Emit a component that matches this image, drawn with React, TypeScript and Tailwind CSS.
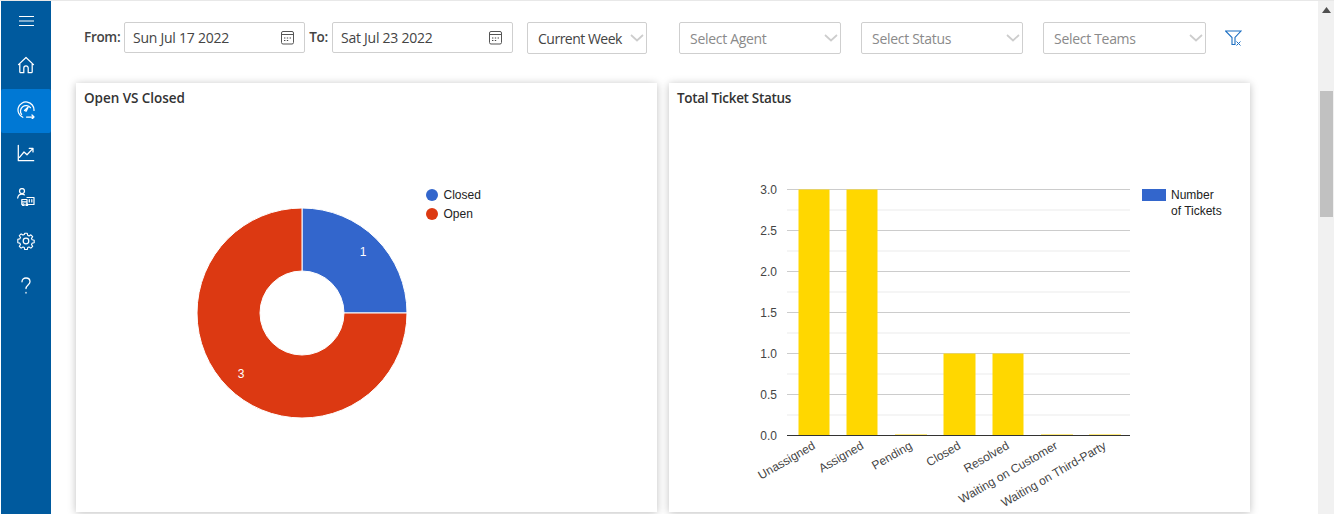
import React from "react";

const F = "[font-family:'Open_Sans',sans-serif]";

function Cal() {
  return (
    <svg width="15" height="15" viewBox="0 0 15 15" fill="none" stroke="#555" strokeWidth="1">
      <rect x="1.500" y="1.500" width="12" height="12.500" rx="1.500" />
      <path d="M1.500 4.500h12" />
      <path d="M4 8h1.400M6.800 8h1.400M9.600 8h1.400M4 10.500h1.400M6.800 10.500h1.400" stroke="#444" />
    </svg>
  );
}

function Chev() {
  return (
    <svg className="shrink-0" width="14" height="8" viewBox="0 0 14 8" fill="none" stroke="#cdcdcd" strokeWidth="1.700">
      <path d="M1 1l6 5.500L13 1" />
    </svg>
  );
}

function DateBox({ value, w }: { value: string; w: string }) {
  return (
    <div className={`flex items-center justify-between ${w} h-[31px] border border-[#cfcfcf] rounded-[2px] pl-[8px] pr-[9px] bg-white`}>
      <span className="text-[14px] text-[#444] tracking-[-0.25px] whitespace-nowrap">{value}</span>
      <Cal />
    </div>
  );
}

function Select({ label, w, dark }: { label: string; w: string; dark?: boolean }) {
  return (
    <div className={`flex items-center justify-between ${w} h-[32px] border border-[#cfcfcf] rounded-[2px] pl-[10px] pr-[2px] bg-white`}>
      <span className={`text-[14px] whitespace-nowrap pt-[1px] ${dark ? "text-[#444] tracking-[-0.5px]" : "text-[#8a8a8a] tracking-[-0.3px]"}`}>{label}</span>
      <Chev />
    </div>
  );
}

const icon = { width: 18, height: 18, viewBox: "0 0 18 18", fill: "none", stroke: "white", strokeWidth: 1.25, strokeLinecap: "round" as const, strokeLinejoin: "round" as const };

const navIcons = [
  <svg {...icon}><path d="M1.500 8.600 9 1.500l7.500 7.100M2.800 7.500v8.300a.9.9 0 0 0 .9.900h3.100v-4.600a2.200 2.200 0 0 1 4.400 0v4.600h3.100a.9.9 0 0 0 .9-.9V7.500" /></svg>,
  <svg {...icon}><path d="M5.800 16.300A8 8 0 1 1 17 9.400" /><path d="M4.600 13.400A5.400 5.400 0 1 1 13.400 6.700" /><path d="M7.500 9.400 11.200 6l-2 4.200z" /><path d="M9.500 16h7.500M15 14l2 2-2 2" /></svg>,
  <svg {...icon}><path d="M1.300 1.300v15.400h15.400" /><path d="M2.500 13.300 7 8l3 2.800 5.800-6.200M12.200 4.300h3.800v3.600" /></svg>,
  <svg {...icon}><circle cx="5" cy="3" r="2.500" /><path d="M.7 10c.4-2.500 2-3.800 4.300-3.800 1 0 1.700.2 2.300.6" /><path d="M4.800 11.500h5.200v4.800M4.800 11.500v4.800M4.800 13.800H10M10 9.500h7v7h-5.500M12.300 11.500v2.500M14.800 11.500v2.500" strokeWidth="1.200" /><circle cx="6.300" cy="16.700" r="0.900" /><circle cx="9.800" cy="16.700" r="0.900" /></svg>,
  <svg {...icon}><circle cx="9" cy="9" r="2.800" /><path d="M7.600 1.300h2.800l.5 2.300 1.500.7 2-1.300 2 2-1.300 2 .7 1.500 2.300.5v2.800l-2.300.5-.7 1.500 1.300 2-2 2-2-1.300-1.500.7-.5 2.300H7.600l-.5-2.300-1.500-.7-2 1.300-2-2 1.300-2-.7-1.500-2.300-.5V8l2.300-.5.7-1.500-1.300-2 2-2 2 1.300 1.500-.7z" transform="translate(.9 .1) scale(.9)" /></svg>,
  <svg {...icon} strokeWidth="1.300"><path d="M5 5.800C5 3.500 6.800 2 9 2s4 1.500 4 3.700c0 3.200-4 3.400-4 6.900" /><path d="M9 16.400v.6" /></svg>,
];

function Card({ title, spacing, children }: { title: string; spacing: string; children: React.ReactNode }) {
  return (
    <div className="w-[581px] h-[429px] bg-white shadow-[0_1px_8px_rgba(0,0,0,0.25)]">
      <div className={`h-[30px] pl-[8px] pt-[5px] text-[13.500px] font-semibold text-[#333] leading-[20px] ${spacing}`}>{title}</div>
      {children}
    </div>
  );
}

function Pie() {
  return (
    <svg className="block" width="581" height="399" viewBox="76 113 581 399" style={{ fontFamily: "'Liberation Sans',sans-serif" }}>
      <path d="M302 208A105 105 0 0 1 407 313H344A42 42 0 0 0 302 271Z" fill="#3366cc" stroke="#fff" strokeWidth="1" />
      <path d="M407 313A105 105 0 1 1 302 208V271A42 42 0 1 0 344 313Z" fill="#dc3912" stroke="#fff" strokeWidth="1" />
      <text x="363" y="256" fontSize="12" fill="#fff" textAnchor="middle">1</text>
      <text x="241" y="378" fontSize="12" fill="#fff" textAnchor="middle">3</text>
      <circle cx="432" cy="195" r="6" fill="#3366cc" />
      <circle cx="432" cy="214" r="6" fill="#dc3912" />
      <text x="443.500" y="199" fontSize="12" fill="#222">Closed</text>
      <text x="443.500" y="218" fontSize="12" fill="#222">Open</text>
    </svg>
  );
}

const bars: [number, number, number][] = [
  [798.500, 31, 3],
  [846.500, 31, 3],
  [895, 32, 0],
  [943.500, 32, 1],
  [992.500, 31, 1],
  [1041, 32, 0],
  [1089, 32, 0],
];
const labels: [string, number][] = [
  ["Unassigned", 816],
  ["Assigned", 864.500],
  ["Pending", 913],
  ["Closed", 961.500],
  ["Resolved", 1010],
  ["Waiting on Customer", 1058.500],
  ["Waiting on Third-Party", 1107],
];

function Bars() {
  const major = [3, 2.500, 2, 1.500, 1, 0.500];
  const y = (v: number) => 435.500 - v * 82;
  return (
    <svg className="block" width="581" height="399" viewBox="669 113 581 399" style={{ fontFamily: "'Liberation Sans',sans-serif" }}>
      {major.map((v) => (
        <g key={v}>
          <line x1="787" x2="1130" y1={y(v)} y2={y(v)} stroke="#cccccc" />
          <line x1="787" x2="1130" y1={y(v) + 20.500} y2={y(v) + 20.500} stroke="#ebebeb" />
          <text x="777" y={y(v) + 4.500} fontSize="12" fill="#444" textAnchor="end">{v.toFixed(1)}</text>
        </g>
      ))}
      <text x="777" y="440" fontSize="12" fill="#444" textAnchor="end">0.0</text>
      {bars.map(([x, w, v]) => (
        <rect key={x} x={x} y={v === 0 ? 434.500 : y(v)} width={w} height={v === 0 ? 1 : v * 82} fill="#ffd700" />
      ))}
      <line x1="787" x2="1130" y1="435.500" y2="435.500" stroke="#333" />
      {labels.map(([t, x]) => (
        <text key={t} x={x} y="448" fontSize="12" fill="#444" textAnchor="end" transform={`rotate(-30 ${x} 448)`}>{t}</text>
      ))}
      <rect x="1142" y="189" width="24" height="12" fill="#3366cc" />
      <text x="1171" y="199" fontSize="12" fill="#222">Number</text>
      <text x="1171" y="215" fontSize="12" fill="#222">of Tickets</text>
    </svg>
  );
}

export default function App() {
  return (
    <div className={`flex h-[514px] w-[1334px] overflow-hidden bg-white border-t border-[#e8e8e8] ${F}`}>
      <aside className="w-[51px] h-full pl-[1px] shrink-0 bg-white">
        <div className="h-full bg-[#005a9e] flex flex-col items-center">
          <div className="h-[42px] w-full flex items-center justify-center pb-[2px]">
            <svg width="15" height="12" viewBox="0 0 15 12" stroke="#fff" strokeWidth="1.200"><path d="M0 1.500h15M0 6h15M0 10.500h15" /></svg>
          </div>
          {navIcons.map((ic, i) => (
            <div
              key={i}
              className={`w-full flex items-center justify-center ${i === 0 ? "h-[46px] pb-[3px]" : i === 1 ? "h-[44px] pb-[3px] bg-[#0078d4] rounded-[2px]" : "h-[44px] pb-[4px]"}`}
            >
              {ic}
            </div>
          ))}
        </div>
      </aside>
      <main className="flex-1 min-w-0 pl-[25px] bg-white">
        <div className="flex items-center h-[82px] pl-[8px] pb-[9px]">
          <span className="text-[13.500px] font-semibold text-[#444] tracking-[-0.3px] w-[40px]">From:</span>
          <DateBox value="Sun Jul 17 2022" w="w-[181px]" />
          <span className="text-[13.500px] font-semibold text-[#444] w-[27px] text-center tracking-[-0.3px]">To:</span>
          <DateBox value="Sat Jul 23 2022" w="w-[181px]" />
          <div className="ml-[14px]"><Select label="Current Week" w="w-[120px]" dark /></div>
          <div className="ml-[32px]"><Select label="Select Agent" w="w-[162px]" /></div>
          <div className="ml-[20px]"><Select label="Select Status" w="w-[162px]" /></div>
          <div className="ml-[20px]"><Select label="Select Teams" w="w-[163px]" /></div>
          <svg className="ml-[19px]" width="17" height="16" viewBox="0 0 17 16" fill="none" stroke="#1b6ec2" strokeWidth="1.100">
            <path d="M.5 1h15.500L10 7.500V14.500H7V7.500z" />
            <path d="M11.500 11.500l4 4M15.500 11.500l-4 4" strokeWidth="1" />
          </svg>
        </div>
        <div className="flex gap-[12px]">
          <Card title="Open VS Closed" spacing="tracking-[-0.05px]"><Pie /></Card>
          <Card title="Total Ticket Status" spacing="tracking-[-0.3px]"><Bars /></Card>
        </div>
      </main>
      <div className="w-[16px] shrink-0 h-full bg-[#f1f1f1] flex flex-col items-end">
        <div className="h-[90px] w-full flex justify-center pt-[6px]">
          <svg width="9" height="6" viewBox="0 0 9 6"><path d="M4.500 0 9 6H0z" fill="#505050" /></svg>
        </div>
        <div className="w-[13px] mr-[1px] h-[126px] bg-[#c1c1c1]" />
      </div>
    </div>
  );
}
